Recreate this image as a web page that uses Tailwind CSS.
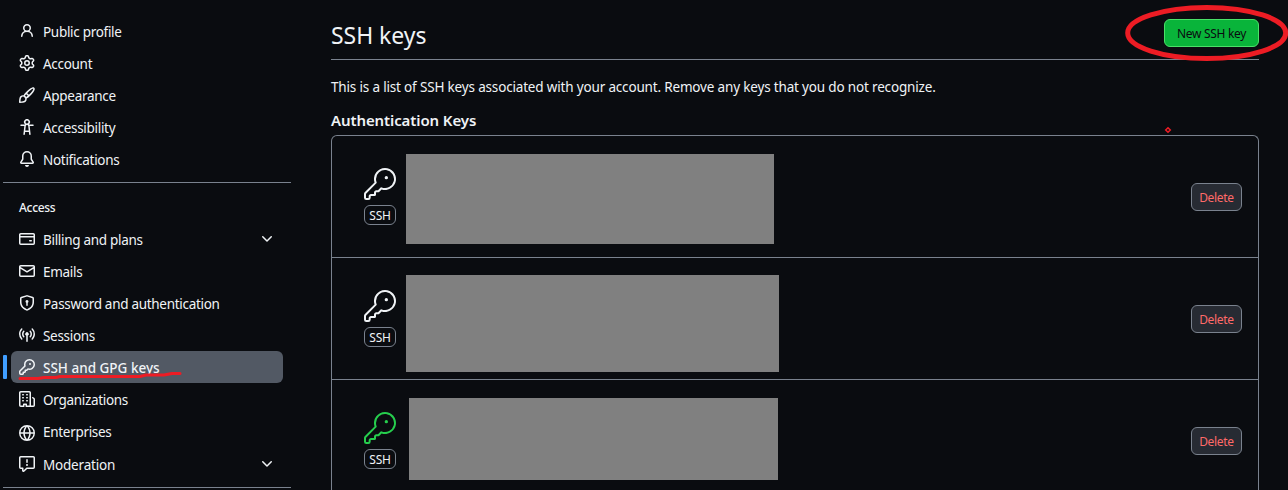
<!DOCTYPE html>
<html lang="en">
<head>
<meta charset="utf-8">
<title>SSH keys</title>
<script src="https://cdn.jsdelivr.net/npm/@tailwindcss/browser@4"></script>
</head>
<body class="relative flex h-[490px] w-[1288px] overflow-hidden bg-[#0a0c10] font-['Noto_Sans','Open_Sans',sans-serif] text-[13.5px] text-[#f0f3f6]">
<svg class="hidden">
  <symbol id="key" viewBox="0 0 24 24"><path d="M16.75 8.5a1.25 1.25 0 1 0 0-2.5 1.25 1.25 0 0 0 0 2.5Z"/><path d="M15.75 0a8.25 8.25 0 1 1-2.541 16.101l-1.636 1.636a1.744 1.744 0 0 1-1.237.513H9.25a.25.25 0 0 0-.25.25v1.448a.876.876 0 0 1-.256.619l-.214.213a.75.75 0 0 1-.545.22H5.25a.25.25 0 0 0-.25.25v1A1.75 1.75 0 0 1 3.25 24h-1.5A1.75 1.75 0 0 1 0 22.25v-2.836c0-.464.185-.908.513-1.236l7.386-7.388A8.249 8.249 0 0 1 15.75 0ZM9 8.25a6.733 6.733 0 0 0 .463 2.462.75.75 0 0 1-.168.804l-7.722 7.721a.25.25 0 0 0-.073.177v2.836c0 .138.112.25.25.25h1.5a.25.25 0 0 0 .25-.25v-1c0-.966.784-1.75 1.75-1.75H7.5v-1c0-.966.784-1.75 1.75-1.75h1.086a.25.25 0 0 0 .177-.073l1.971-1.972a.75.75 0 0 1 .804-.168A6.75 6.75 0 1 0 9 8.25Z"/></symbol>
  <symbol id="chevron" viewBox="0 0 16 16"><path d="M12.78 5.22a.749.749 0 0 1 0 1.06l-4.25 4.25a.749.749 0 0 1-1.06 0L3.22 6.28a.749.749 0 1 1 1.06-1.06L8 8.939l3.72-3.719a.749.749 0 0 1 1.06 0Z"/></symbol>
</svg>

<nav class="w-[291px] shrink-0 pt-[15px] pl-[3px] tracking-[-0.3px]">
  <ul>
    <li class="flex h-8 items-center gap-2 pl-4"><svg class="size-4 fill-current" viewBox="0 0 16 16"><path d="M10.561 8.073a6.005 6.005 0 0 1 3.432 5.142.75.75 0 1 1-1.498.07 4.5 4.5 0 0 0-8.99 0 .75.75 0 0 1-1.498-.07 6.004 6.004 0 0 1 3.431-5.142 3.999 3.999 0 1 1 5.123 0ZM10.5 5a2.5 2.5 0 1 0-5 0 2.5 2.5 0 0 0 5 0Z"/></svg><span class="pt-[3px]">Public profile</span></li>
    <li class="flex h-8 items-center gap-2 pl-4"><svg class="size-4 fill-current" viewBox="0 0 16 16"><path d="M8 0a8.2 8.2 0 0 1 .701.031C9.444.095 9.99.645 10.16 1.29l.288 1.107c.018.066.079.158.212.224.231.114.454.243.668.386.123.082.233.09.299.071l1.103-.303c.644-.176 1.392.021 1.82.63.27.385.506.792.704 1.218.315.675.111 1.422-.364 1.891l-.814.806c-.049.048-.098.147-.088.294.016.257.016.515 0 .772-.01.147.038.246.088.294l.814.806c.475.469.679 1.216.364 1.891a7.977 7.977 0 0 1-.704 1.217c-.428.61-1.176.807-1.82.63l-1.102-.302c-.067-.019-.177-.011-.3.071a5.909 5.909 0 0 1-.668.386c-.133.066-.194.158-.211.224l-.29 1.106c-.168.646-.715 1.196-1.458 1.26a8.006 8.006 0 0 1-1.402 0c-.743-.064-1.289-.614-1.458-1.26l-.289-1.106c-.018-.066-.079-.158-.212-.224a5.738 5.738 0 0 1-.668-.386c-.123-.082-.233-.09-.299-.071l-1.103.303c-.644.176-1.392-.021-1.82-.63a8.12 8.12 0 0 1-.704-1.218c-.315-.675-.111-1.422.363-1.891l.815-.806c.05-.048.098-.147.088-.294a6.214 6.214 0 0 1 0-.772c.01-.147-.038-.246-.088-.294l-.815-.806C.635 6.045.431 5.298.746 4.623a7.92 7.92 0 0 1 .704-1.217c.428-.61 1.176-.807 1.82-.63l1.102.302c.067.019.177.011.3-.071.214-.143.437-.272.668-.386.133-.066.194-.158.211-.224l.29-1.106C6.009.645 6.556.095 7.299.03 7.53.01 7.764 0 8 0Zm-.571 1.525c-.036.003-.108.036-.137.146l-.289 1.105c-.147.561-.549.967-.998 1.189-.173.086-.34.183-.5.29-.417.278-.97.423-1.529.27l-1.103-.303c-.109-.03-.175.016-.195.045-.22.312-.412.644-.573.99-.014.031-.021.11.059.19l.815.806c.411.406.562.957.53 1.456a4.709 4.709 0 0 0 0 .582c.032.499-.119 1.05-.53 1.456l-.815.806c-.081.08-.073.159-.059.19.162.346.353.677.573.989.02.03.085.076.195.046l1.102-.303c.56-.153 1.113-.008 1.53.27.161.107.328.204.501.29.447.222.85.629.997 1.189l.289 1.105c.029.109.101.143.137.146a6.6 6.6 0 0 0 1.142 0c.036-.003.108-.036.137-.146l.289-1.105c.147-.561.549-.967.998-1.189.173-.086.34-.183.5-.29.417-.278.97-.423 1.529-.27l1.103.303c.109.029.175-.016.195-.045.22-.313.411-.644.573-.99.014-.031.021-.11-.059-.19l-.815-.806c-.411-.406-.562-.957-.53-1.456a4.709 4.709 0 0 0 0-.582c-.032-.499.119-1.05.53-1.456l.815-.806c.081-.08.073-.159.059-.19a6.464 6.464 0 0 0-.573-.989c-.02-.03-.085-.076-.195-.046l-1.102.303c-.56.153-1.113.008-1.53-.27a4.44 4.44 0 0 0-.501-.29c-.447-.222-.85-.629-.997-1.189l-.289-1.105c-.029-.11-.101-.143-.137-.146a6.6 6.6 0 0 0-1.142 0ZM11 8a3 3 0 1 1-6 0 3 3 0 0 1 6 0ZM9.5 8a1.5 1.5 0 1 0-3.001.001A1.5 1.5 0 0 0 9.5 8Z"/></svg><span class="pt-[3px]">Account</span></li>
    <li class="flex h-8 items-center gap-2 pl-4"><svg class="size-4 fill-current" viewBox="0 0 16 16"><path d="M11.134 1.535c.7-.509 1.416-.942 2.076-1.155.649-.21 1.463-.267 2.069.34.603.601.568 1.411.368 2.07-.202.668-.624 1.39-1.125 2.096-1.011 1.424-2.496 2.987-3.775 4.249-1.098 1.084-2.132 1.839-3.04 2.3a3.744 3.744 0 0 1-1.055 3.217c-.431.431-1.065.691-1.657.861-.614.177-1.294.287-1.914.357A21.151 21.151 0 0 1 .797 16H.743a.75.75 0 0 1-.743-.743v-.054a21.25 21.25 0 0 1 .13-2.284c.067-.647.187-1.287.358-1.914.17-.591.43-1.226.86-1.657a3.746 3.746 0 0 1 3.227-1.054c.466-.893 1.225-1.907 2.314-2.982 1.271-1.255 2.833-2.75 4.245-3.777ZM1.62 13.089c-.051.464-.086.929-.104 1.395.466-.018.932-.053 1.396-.104a10.511 10.511 0 0 0 1.668-.309c.526-.151.856-.325 1.011-.48a2.25 2.25 0 1 0-3.182-3.182c-.155.155-.329.485-.48 1.01a10.515 10.515 0 0 0-.309 1.67Zm10.396-10.34c-1.224.89-2.605 2.189-3.822 3.384l1.718 1.718c1.21-1.205 2.51-2.597 3.387-3.833.47-.662.78-1.227.912-1.662.134-.444.032-.551.009-.575h-.001V1.78c-.014-.014-.113-.113-.548.027-.432.14-.995.462-1.655.942Zm-4.832 7.266-.001.001a9.859 9.859 0 0 0 1.63-1.142L7.155 7.216a9.7 9.7 0 0 0-1.161 1.607c.482.302.889.71 1.19 1.192Z"/></svg><span class="pt-[3px]">Appearance</span></li>
    <li class="flex h-8 items-center gap-2 pl-4"><svg class="size-4 fill-current" viewBox="0 0 16 16"><path d="M9.923 5.302c.063.063.122.129.178.198H14A.75.75 0 0 1 14 7h-3.3l.578 5.163.362 2.997a.75.75 0 0 1-1.49.18L9.868 13H6.132l-.282 2.34a.75.75 0 0 1-1.49-.18l.362-2.997L5.3 7H2a.75.75 0 0 1 0-1.5h3.9a2.54 2.54 0 0 1 .176-.198 3 3 0 1 1 3.847 0ZM9.2 7.073h-.001a1.206 1.206 0 0 0-2.398 0L6.305 11.5h3.39ZM9.5 3a1.5 1.5 0 1 0-3.001.001A1.5 1.5 0 0 0 9.5 3Z"/></svg><span class="pt-[3px]">Accessibility</span></li>
    <li class="flex h-8 items-center gap-2 pl-4"><svg class="size-4 fill-current" viewBox="0 0 16 16"><path d="M8 16a2 2 0 0 0 1.985-1.75c.017-.137-.097-.25-.235-.25h-3.5c-.138 0-.252.113-.235.25A2 2 0 0 0 8 16ZM3 5a5 5 0 0 1 10 0v2.947c0 .05.015.098.042.139l1.703 2.555A1.519 1.519 0 0 1 13.482 13H2.518a1.516 1.516 0 0 1-1.263-2.36l1.703-2.554A.255.255 0 0 0 3 7.947Zm5-3.5A3.5 3.5 0 0 0 4.5 5v2.947c0 .346-.102.683-.294.97l-1.703 2.556a.017.017 0 0 0-.003.01l.001.006c0 .002.002.004.004.006l.006.004.007.001h10.964l.007-.001.006-.004.004-.006.001-.007a.017.017 0 0 0-.003-.01l-1.703-2.554a1.745 1.745 0 0 1-.294-.97V5A3.5 3.5 0 0 0 8 1.5Z"/></svg><span class="pt-[3px]">Notifications</span></li>
  </ul>
  <hr class="mt-[7px] border-[#7a828e]">
  <h3 class="flex h-10 items-center pt-[10px] pl-4 text-xs font-medium">Access</h3>
  <ul>
    <li class="flex h-8 items-center gap-2 pl-4"><svg class="size-4 fill-current" viewBox="0 0 16 16"><path d="M10.75 9a.75.75 0 0 0 0 1.5h1.5a.75.75 0 0 0 0-1.5h-1.5Z"/><path d="M0 3.75C0 2.784.784 2 1.75 2h12.5c.966 0 1.75.784 1.75 1.75v8.5A1.75 1.75 0 0 1 14.25 14H1.75A1.75 1.75 0 0 1 0 12.25ZM14.5 6.5h-13v5.75c0 .138.112.25.25.25h12.5a.25.25 0 0 0 .25-.25Zm0-2.75a.25.25 0 0 0-.25-.25H1.75a.25.25 0 0 0-.25.25V5h13Z"/></svg><span class="pt-[3px]">Billing and plans</span><svg class="mr-4 ml-auto size-4 fill-current"><use href="#chevron"/></svg></li>
    <li class="flex h-8 items-center gap-2 pl-4"><svg class="size-4 fill-current" viewBox="0 0 16 16"><path d="M1.75 2h12.5c.966 0 1.75.784 1.75 1.75v8.5A1.75 1.75 0 0 1 14.25 14H1.75A1.75 1.75 0 0 1 0 12.25v-8.5C0 2.784.784 2 1.75 2ZM1.5 12.251c0 .138.112.25.25.25h12.5a.25.25 0 0 0 .25-.25V5.809L8.38 9.397a.75.75 0 0 1-.76 0L1.5 5.809v6.442Zm13-8.181v-.32a.25.25 0 0 0-.25-.25H1.75a.25.25 0 0 0-.25.25v.32L8 7.88Z"/></svg><span class="pt-[3px]">Emails</span></li>
    <li class="flex h-8 items-center gap-2 pl-4"><svg class="size-4 fill-current" viewBox="0 0 16 16"><path d="m8.533.133 5.25 1.68A1.75 1.75 0 0 1 15 3.48V7c0 1.566-.32 3.182-1.303 4.682-.983 1.498-2.585 2.813-5.032 3.855a1.697 1.697 0 0 1-1.33 0c-2.447-1.042-4.049-2.357-5.032-3.855C1.32 10.182 1 8.566 1 7V3.48a1.75 1.75 0 0 1 1.217-1.667l5.25-1.68a1.748 1.748 0 0 1 1.066 0Zm-.61 1.429.001.001-5.25 1.68a.251.251 0 0 0-.174.237V7c0 1.36.275 2.666 1.057 3.859.784 1.194 2.121 2.342 4.366 3.298a.196.196 0 0 0 .154 0c2.245-.957 3.582-2.103 4.366-3.297C13.225 9.666 13.5 8.358 13.5 7V3.48a.25.25 0 0 0-.174-.238l-5.25-1.68a.25.25 0 0 0-.153 0ZM9.5 6.5c0 .536-.286 1.032-.75 1.3v2.45a.75.75 0 0 1-1.5 0V7.8A1.5 1.5 0 1 1 9.5 6.5Z"/></svg><span class="pt-[3px]">Password and authentication</span></li>
    <li class="flex h-8 items-center gap-2 pl-4"><svg class="size-4 fill-current" viewBox="0 0 16 16"><path d="M8.75 8.582v5.668a.75.75 0 0 1-1.5 0V8.582a1.75 1.75 0 1 1 1.5 0Zm3.983-7.125a.75.75 0 0 1 1.06.026A7.976 7.976 0 0 1 16 7c0 2.139-.84 4.083-2.207 5.517a.75.75 0 1 1-1.086-1.034A6.474 6.474 0 0 0 14.5 7a6.474 6.474 0 0 0-1.793-4.483.75.75 0 0 1 .026-1.06Zm-9.466 0c.3.286.312.76.026 1.06A6.474 6.474 0 0 0 1.5 7a6.47 6.47 0 0 0 1.793 4.483.75.75 0 0 1-1.086 1.034A7.973 7.973 0 0 1 0 7c0-2.139.84-4.083 2.207-5.517a.75.75 0 0 1 1.06-.026Zm8.556 2.321A4.988 4.988 0 0 1 13 7a4.988 4.988 0 0 1-1.177 3.222.75.75 0 1 1-1.146-.967A3.487 3.487 0 0 0 11.5 7c0-.86-.309-1.645-.823-2.255a.75.75 0 0 1 1.146-.967Zm-6.492.958A3.48 3.48 0 0 0 4.5 7a3.48 3.48 0 0 0 .823 2.255.75.75 0 0 1-1.146.967A4.981 4.981 0 0 1 3 7a4.982 4.982 0 0 1 1.188-3.236.75.75 0 1 1 1.143.972Z"/></svg><span class="pt-[3px]">Sessions</span></li>
    <li class="flex h-8 items-center gap-1"><span class="h-6 w-1 rounded-[1px] bg-[#409eff]"></span><div class="flex h-8 w-[272px] items-center gap-2 rounded-md bg-[#525964] pl-2"><svg class="size-4 fill-current" viewBox="0 0 16 16"><path d="M10.5 0a5.499 5.499 0 1 1-1.288 10.848l-.932.932a.749.749 0 0 1-.53.22H7v.75a.749.749 0 0 1-.22.53l-.5.5a.749.749 0 0 1-.53.22H5v.75a.749.749 0 0 1-.22.53l-.5.5a.749.749 0 0 1-.53.22h-2A1.75 1.75 0 0 1 0 14.25v-2c0-.199.079-.389.22-.53l4.932-4.932A5.5 5.5 0 0 1 10.5 0Zm-4 5.5c-.001.431.069.86.205 1.269a.75.75 0 0 1-.181.768L1.5 12.56v1.69c0 .138.112.25.25.25h1.69l.06-.06v-1.19a.75.75 0 0 1 .75-.75h1.19l.06-.06v-1.19a.75.75 0 0 1 .75-.75h1.19l1.023-1.025a.75.75 0 0 1 .768-.18A4 4 0 1 0 6.5 5.5ZM11 6a1 1 0 1 1 0-2 1 1 0 0 1 0 2Z"/></svg><span class="pt-[3px] font-medium tracking-normal">SSH and GPG keys</span></div></li>
    <li class="flex h-8 items-center gap-2 pl-4"><svg class="size-4 fill-current" viewBox="0 0 16 16"><path d="M1.75 16A1.75 1.75 0 0 1 0 14.25V1.75C0 .784.784 0 1.75 0h8.5C11.216 0 12 .784 12 1.75v12.5c0 .085-.006.168-.018.25h2.268a.25.25 0 0 0 .25-.25V8.285a.25.25 0 0 0-.111-.208l-1.055-.703a.749.749 0 1 1 .832-1.248l1.055.703c.487.325.779.871.779 1.456v5.965A1.75 1.75 0 0 1 14.25 16h-3.5a.766.766 0 0 1-.197-.026c-.099.017-.2.026-.303.026h-3a.75.75 0 0 1-.75-.75V14h-1v1.25a.75.75 0 0 1-.75.75Zm-.25-1.75c0 .138.112.25.25.25H4v-1.25a.75.75 0 0 1 .75-.75h2.5a.75.75 0 0 1 .75.75v1.25h2.25a.25.25 0 0 0 .25-.25V1.75a.25.25 0 0 0-.25-.25h-8.5a.25.25 0 0 0-.25.25ZM3.75 6h.5a.75.75 0 0 1 0 1.5h-.5a.75.75 0 0 1 0-1.5ZM3 3.75A.75.75 0 0 1 3.75 3h.5a.75.75 0 0 1 0 1.5h-.5A.75.75 0 0 1 3 3.75Zm4 3A.75.75 0 0 1 7.75 6h.5a.75.75 0 0 1 0 1.5h-.5A.75.75 0 0 1 7 6.75ZM7.75 3h.5a.75.75 0 0 1 0 1.5h-.5a.75.75 0 0 1 0-1.5ZM3 9.75A.75.75 0 0 1 3.75 9h.5a.75.75 0 0 1 0 1.5h-.5A.75.75 0 0 1 3 9.75ZM7.75 9h.5a.75.75 0 0 1 0 1.5h-.5a.75.75 0 0 1 0-1.5Z"/></svg><span class="pt-[3px]">Organizations</span></li>
    <li class="flex h-[33px] items-center gap-2 pl-4"><svg class="mt-0.5 size-4 fill-current" viewBox="0 0 16 16"><path d="M8 0a8 8 0 1 1 0 16A8 8 0 0 1 8 0ZM5.78 8.75a9.64 9.64 0 0 0 1.363 4.177c.255.426.542.832.857 1.215.245-.296.551-.705.857-1.215A9.64 9.64 0 0 0 10.22 8.75Zm4.44-1.5a9.64 9.64 0 0 0-1.363-4.177c-.307-.51-.612-.919-.857-1.215a9.927 9.927 0 0 0-.857 1.215A9.64 9.64 0 0 0 5.78 7.25Zm-5.944 1.5H1.543a6.507 6.507 0 0 0 4.666 5.5c-.123-.181-.24-.365-.352-.552-.715-1.192-1.437-2.874-1.581-4.948Zm-2.733-1.5h2.733c.144-2.074.866-3.756 1.58-4.948.12-.197.237-.381.353-.552a6.507 6.507 0 0 0-4.666 5.5Zm10.181 1.5c-.144 2.074-.866 3.756-1.58 4.948-.12.197-.237.381-.353.552a6.507 6.507 0 0 0 4.666-5.5Zm2.733-1.5a6.507 6.507 0 0 0-4.666-5.5c.123.181.24.365.353.552.714 1.192 1.436 2.874 1.58 4.948Z"/></svg><span class="pt-0.5">Enterprises</span></li>
    <li class="flex h-8 items-center gap-2 pl-4"><svg class="size-4 fill-current" viewBox="0 0 16 16"><path d="M0 1.75C0 .784.784 0 1.75 0h12.5C15.216 0 16 .784 16 1.75v9.5A1.75 1.75 0 0 1 14.25 13H8.06l-2.573 2.573A1.458 1.458 0 0 1 3 14.543V13H1.75A1.75 1.75 0 0 1 0 11.25Zm1.75-.25a.25.25 0 0 0-.25.25v9.5c0 .138.112.25.25.25h2a.75.75 0 0 1 .75.75v2.19l2.72-2.72a.749.749 0 0 1 .53-.22h6.5a.25.25 0 0 0 .25-.25v-9.5a.25.25 0 0 0-.25-.25Zm7 2.25v2.5a.75.75 0 0 1-1.5 0v-2.5a.75.75 0 0 1 1.5 0ZM9 9a1 1 0 1 1-2 0 1 1 0 0 1 2 0Z"/></svg><span class="pt-[3px] tracking-[-0.2px]">Moderation</span><svg class="mr-4 ml-auto size-4 fill-current"><use href="#chevron"/></svg></li>
  </ul>
  <hr class="mt-[7px] border-[#7a828e]">
</nav>

<main class="ml-10 flex h-[490px] w-[928px] shrink-0 flex-col">
  <header class="flex h-[60px] shrink-0 items-center justify-between border-b border-[#7a828e] pt-[7px]">
    <h1 class="pt-1 text-[23px] leading-8 tracking-[-0.05px]">SSH keys</h1>
    <button class="flex h-7 w-[95px] items-center justify-center rounded-md border border-[#4ae168] bg-[#09b43a] pt-0.5 text-xs tracking-[-0.3px] text-[#0a0c10]">New SSH key</button>
  </header>
  <p class="mt-[17px] leading-5 tracking-[-0.17px]">This is a list of SSH keys associated with your account. Remove any keys that you do not recognize.</p>
  <h2 class="mt-[13px] text-[15px] leading-5 font-semibold tracking-[-0.1px]">Authentication Keys</h2>
  <ul class="mt-[5px] min-h-0 flex-1 overflow-hidden rounded-t-md border border-b-0 border-[#7a828e]">
    <li class="flex h-[122px] border-b border-[#7a828e] pr-4 pl-8">
      <div class="w-8 pt-8"><svg class="size-8 fill-current"><use href="#key"/></svg><div class="mt-[5px] flex h-5 items-center justify-center rounded-md border border-[#7a828e] pt-px text-xs tracking-[-0.2px]">SSH</div></div>
      <div class="mt-[18px] ml-[10px] h-[90px] w-[368px] bg-[#808080]"></div>
      <button class="mt-[47px] ml-auto flex h-7 w-[51px] items-center justify-center rounded-md border border-[#7a828e] bg-[#272b33] pt-0.5 text-xs tracking-[-0.3px] text-[#ff6a69]">Delete</button>
    </li>
    <li class="flex h-[122px] border-b border-[#7a828e] pr-4 pl-8">
      <div class="w-8 pt-8"><svg class="size-8 fill-current"><use href="#key"/></svg><div class="mt-[5px] flex h-5 items-center justify-center rounded-md border border-[#7a828e] pt-px text-xs tracking-[-0.2px]">SSH</div></div>
      <div class="mt-[17px] ml-[10px] h-[97px] w-[373px] bg-[#808080]"></div>
      <button class="mt-[47px] ml-auto flex h-7 w-[51px] items-center justify-center rounded-md border border-[#7a828e] bg-[#272b33] pt-0.5 text-xs tracking-[-0.3px] text-[#ff6a69]">Delete</button>
    </li>
    <li class="flex h-[110px] pr-4 pl-8">
      <div class="w-8 pt-8"><svg class="size-8 fill-[#26cd4d]"><use href="#key"/></svg><div class="mt-[5px] flex h-5 items-center justify-center rounded-md border border-[#7a828e] pt-px text-xs tracking-[-0.2px]">SSH</div></div>
      <div class="mt-[18px] ml-[13px] h-[82px] w-[369px] bg-[#808080]"></div>
      <button class="mt-[47px] ml-auto flex h-7 w-[51px] items-center justify-center rounded-md border border-[#7a828e] bg-[#272b33] pt-0.5 text-xs tracking-[-0.3px] text-[#ff6a69]">Delete</button>
    </li>
  </ul>
</main>

<!-- hand-drawn red marks -->
<svg class="pointer-events-none absolute inset-0 h-[490px] w-[1288px] fill-none stroke-[#ed1c24]" viewBox="0 0 1288 490">
  <ellipse cx="1206.7" cy="33" rx="79" ry="25.5" stroke-width="5"/>
  <path d="M1168 127.7l2.3 2.3-2.3 2.3-2.3-2.3Z" stroke-width="1.5"/>
  <path d="M20 378.5H38L44 377.5H56L60 376.5H140L146 375H164L172 373.5H180" stroke-width="3" stroke-linecap="round" stroke-linejoin="round"/>
</svg>
</body>
</html>
